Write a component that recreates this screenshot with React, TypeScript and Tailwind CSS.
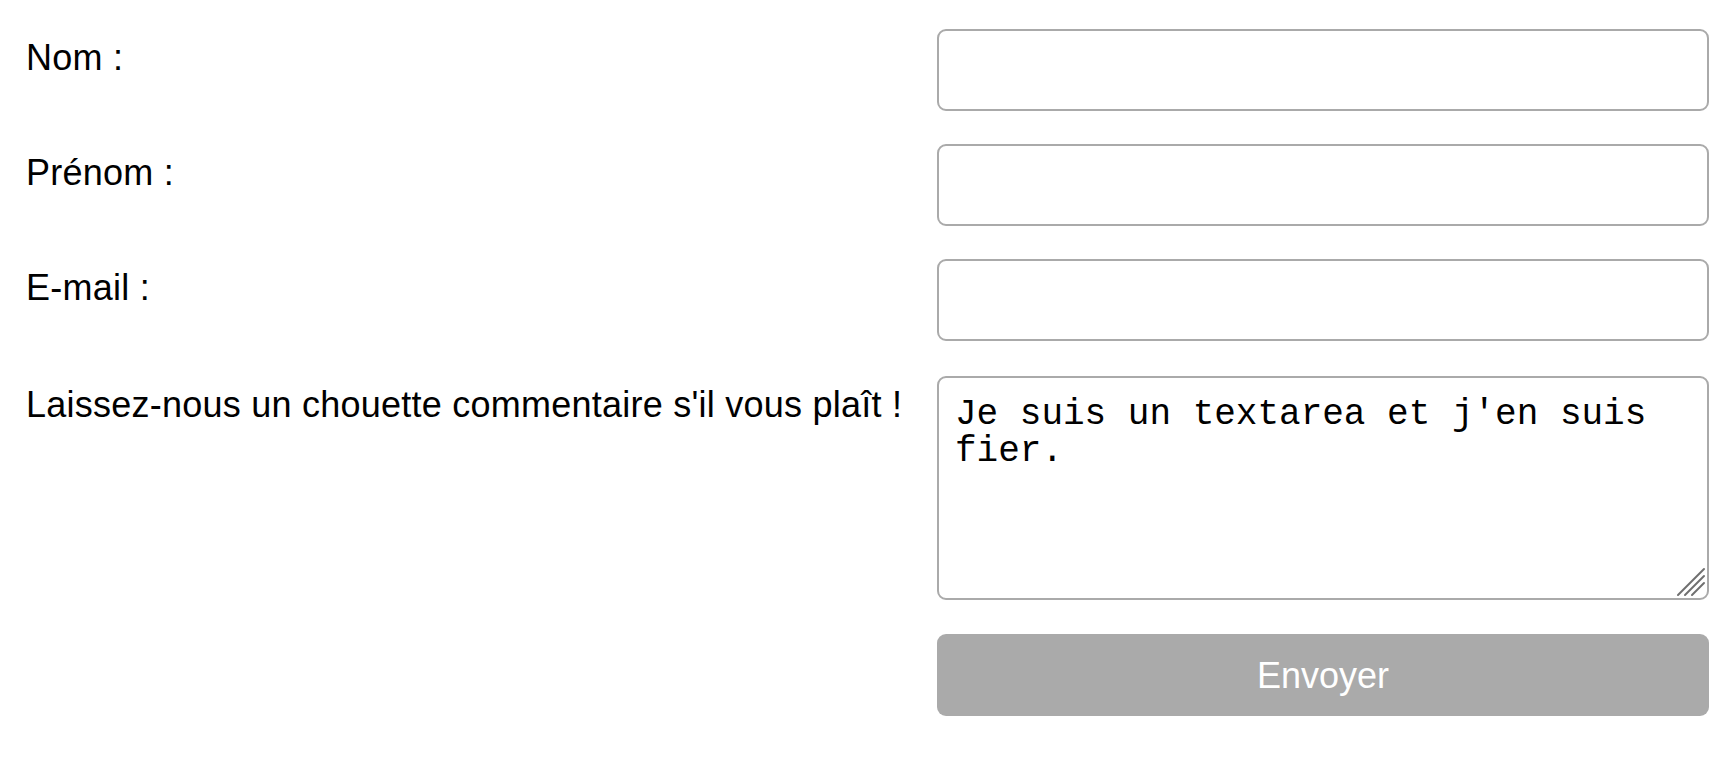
const fields = [
  { id: "nom", label: "Nom :", type: "text" },
  { id: "prenom", label: "Prénom :", type: "text" },
  { id: "email", label: "E-mail :", type: "email" },
];

const labelClass =
  "pt-[8px] text-[36px] leading-[42px] tracking-[0.24px] text-black whitespace-nowrap";

const App = () => {
  return (
    <div className="min-h-screen bg-white font-['Liberation_Sans',Arial,sans-serif]">
      <form className="flex flex-col pt-[29px] pl-[26px] pr-[23px]">
        {/* Text inputs */}
        {fields.map((field, idx) => (
          <div
            key={field.id}
            className={`grid grid-cols-[minmax(0,1fr)_772px] ${idx === 0 ? "" : "mt-[33px]"}`}
          >
            <label htmlFor={field.id} className={labelClass}>
              {field.label}
            </label>
            <input
              id={field.id}
              type={field.type}
              className="h-[82px] w-full rounded-[9px] border-2 border-[#aaaaaa] bg-white px-[16px] text-[36px] outline-none"
            />
          </div>
        ))}

        {/* Comment */}
        <div className="mt-[35px] grid grid-cols-[minmax(0,1fr)_772px]">
          <label htmlFor="msg" className={labelClass}>
            Laissez-nous un chouette commentaire s'il vous plaît !
          </label>
          <div className="relative">
            <textarea
              id="msg"
              defaultValue="Je suis un textarea et j'en suis fier."
              className="block h-[224px] w-full resize-none rounded-[9px] border-2 border-[#aaaaaa] bg-white px-[16px] pt-[18px] font-['Liberation_Mono','Courier_New',monospace] text-[36px] leading-[37px] text-black outline-none"
            />
            <svg
              className="pointer-events-none absolute right-[3px] bottom-[3px] h-[30px] w-[30px]"
              viewBox="0 0 30 30"
              fill="none"
              stroke="#6f6f6f"
              strokeWidth="2"
              strokeLinecap="round"
            >
              <path d="M2 28 L28 2" />
              <path d="M9 28 L28 9" />
              <path d="M16 28 L28 16" />
            </svg>
          </div>
        </div>

        {/* Submit */}
        <div className="mt-[34px] grid grid-cols-[minmax(0,1fr)_772px]">
          <div />
          <button
            type="button"
            className="flex h-[82px] w-full items-center justify-center rounded-[9px] bg-[#aaaaaa] pt-[2px] text-[36px] leading-[42px] text-white"
          >
            Envoyer
          </button>
        </div>
      </form>
    </div>
  );
};

export default App;
